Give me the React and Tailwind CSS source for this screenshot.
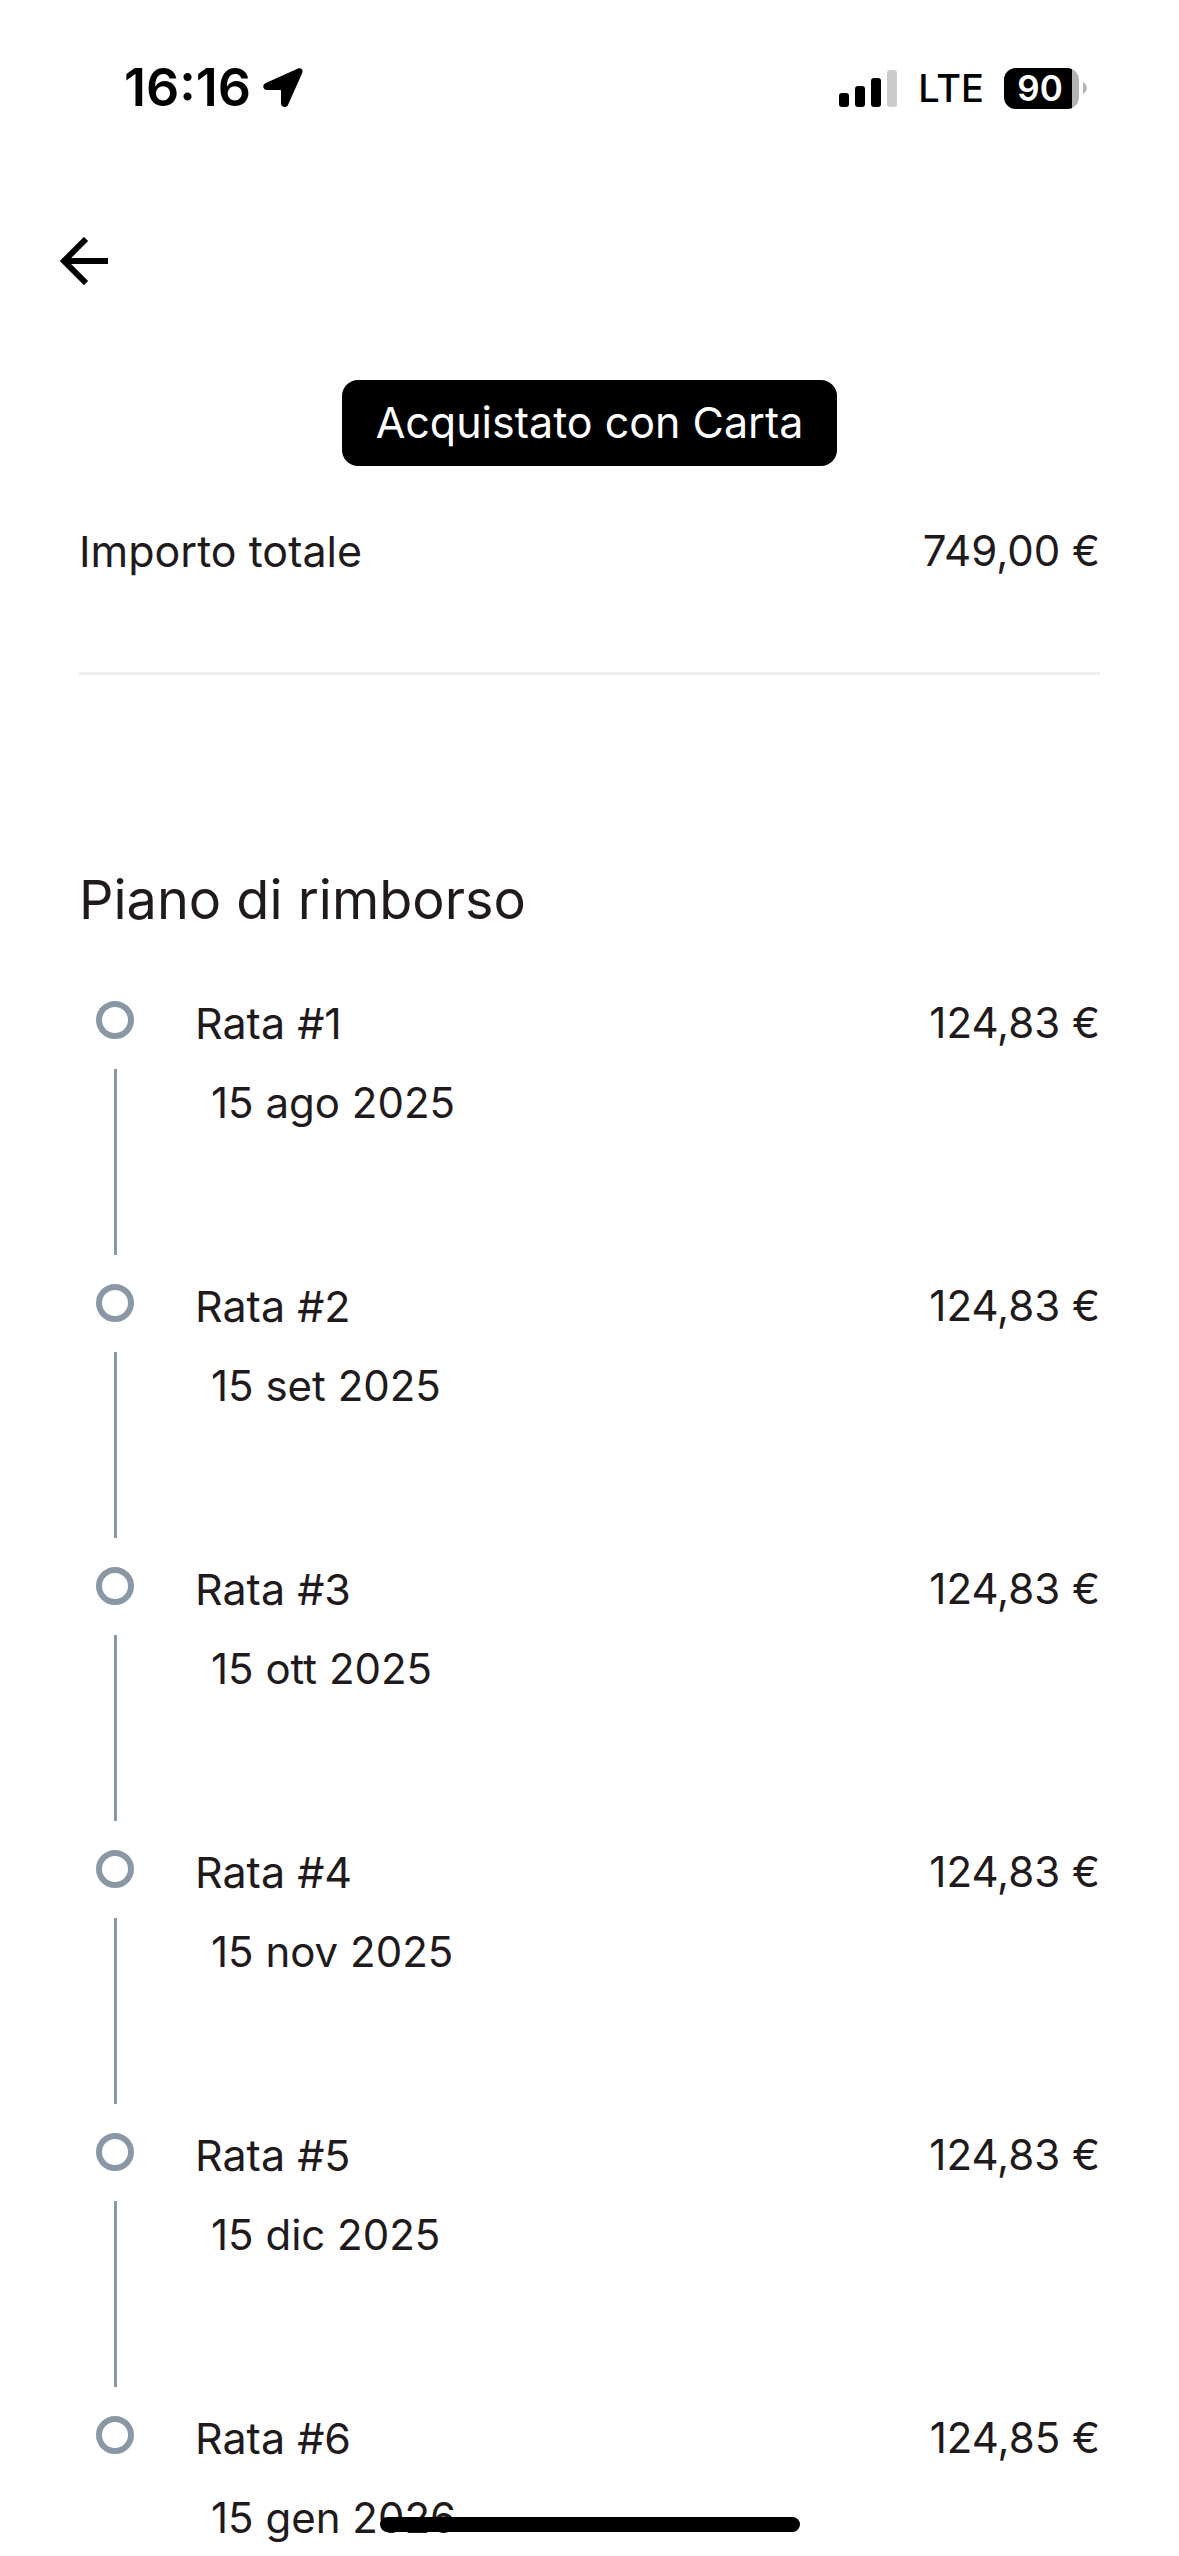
const rate = [
  { id: 1, date: "15 ago 2025", amount: "124,83 €" },
  { id: 2, date: "15 set 2025", amount: "124,83 €" },
  { id: 3, date: "15 ott 2025", amount: "124,83 €" },
  { id: 4, date: "15 nov 2025", amount: "124,83 €" },
  { id: 5, date: "15 dic 2025", amount: "124,83 €" },
  { id: 6, date: "15 gen 2026", amount: "124,85 €" },
];

// Status bar with clock, signal and battery
const StatusBar = () => {
  return (
    <div className="flex items-center justify-between pt-14 pr-23 pl-31 text-black">
      <div className="flex items-center gap-3">
        <span className="text-[52px] leading-16 font-semibold">16:16</span>
        <svg className="h-10 w-10" viewBox="0 0 40 40" fill="currentColor" aria-hidden="true">
          <path d="M35 0.6C38 -0.6 40.6 1.8 39.2 5L25.2 36.4C23.4 40.4 18 39.4 18 35.4V22.6C18 22.2 17.8 22 17.4 22H4C-0.2 22 -1.2 16.8 2.8 15Z" />
        </svg>
      </div>

      <div className="flex items-center gap-5">
        <svg className="h-10 w-15" viewBox="0 0 60 40" aria-hidden="true">
          <rect x="1" y="25" width="10" height="14" rx="3" />
          <rect x="17" y="18" width="10" height="21" rx="3" />
          <rect x="33" y="10" width="10" height="29" rx="3" />
          <rect x="49" y="2" width="10" height="37" rx="3" fill="#cccccc" />
        </svg>
        <span className="text-[38px] leading-16 font-medium">LTE</span>
        <div className="flex items-center gap-1">
          <div className="flex h-[41px] w-[75px] items-center overflow-hidden rounded-xl bg-[#b3b3b3]">
            <span className="flex h-full w-[68px] items-center justify-center bg-black pl-1 text-[35px] font-semibold text-white">
              90
            </span>
          </div>
          <svg className="h-3 w-1" viewBox="0 0 4 12" aria-hidden="true">
            <path d="M0 0C5 3 5 9 0 12Z" fill="#b3b3b3" />
          </svg>
        </div>
      </div>
    </div>
  );
};

// Single instalment with its timeline marker
const Rata = ({ id, date, amount, last }) => {
  return (
    <li className={last ? "flex" : "flex h-[283px]"}>
      <div className="flex w-[116px] shrink-0 flex-col items-start pt-0.5 pl-[17px]">
        <div className="flex w-[38px] flex-col items-center gap-[30px]">
          <span className="h-[38px] w-[38px] rounded-full border-6 border-[#8a98a5]" />
          {!last && <span className="h-[186px] w-[3px] bg-[#8a98a5]" />}
        </div>
      </div>
      <div className="flex-1">
        <div className="flex items-center justify-between leading-12">
          <h3 className="text-[43px]">Rata #{id}</h3>
          <span className="text-[42px]">{amount}</span>
        </div>
        <p className="mt-8 pl-4 text-[42px] leading-12">{date}</p>
      </div>
    </li>
  );
};

export default function App() {
  return (
    <div className="h-screen overflow-hidden bg-white font-['Inter',sans-serif] text-[#211a1d]">
      <StatusBar />

      <header className="px-[60px] pt-[117px]">
        <button type="button" aria-label="Indietro" className="block text-black">
          <svg className="h-12 w-12" viewBox="0 0 48 48" fill="none" stroke="currentColor" strokeWidth="6" aria-hidden="true">
            <path d="M48 24H4M26 2L4 24L26 46" />
          </svg>
        </button>
      </header>

      <main className="px-[79px] pt-[95px]">
        <div className="flex justify-center">
          <span className="rounded-2xl bg-black px-[34px] pt-[18px] pb-5 text-[43px] leading-12 text-white">
            Acquistato con Carta
          </span>
        </div>

        {/* Total amount */}
        <div className="mt-[61px] flex items-center justify-between leading-12">
          <span className="text-[43px]">Importo totale</span>
          <span className="text-[42px]">749,00 €</span>
        </div>
        <hr className="mt-[97px] border-t-3 border-[#efefef]" />

        {/* Repayment plan */}
        <h2 className="mt-[193px] text-[54px] leading-16">Piano di rimborso</h2>
        <ul className="mt-[67px]">
          {rate.map((rata, index) => (
            <Rata key={rata.id} {...rata} last={index === rate.length - 1} />
          ))}
        </ul>
      </main>

      {/* Home indicator */}
      <div className="fixed bottom-6 left-1/2 h-[15px] w-[420px] -translate-x-1/2 rounded-full bg-black" />
    </div>
  );
}
